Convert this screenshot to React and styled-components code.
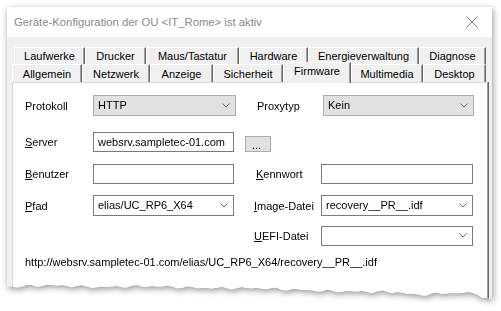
import React from 'react';
import styled, { createGlobalStyle } from 'styled-components';

const GlobalStyle = createGlobalStyle`
  html, body {
    margin: 0;
    padding: 0;
    background: #fff;
  }
  body {
    width: 501px;
    height: 311px;
    overflow: hidden;
    font-family: "Liberation Sans", Arial, sans-serif;
    font-size: 11px;
    color: #000;
  }
`;

// torn bottom edge of the screenshot, points relative to the window box
const edge = [
  [0, 280], [40, 278], [90, 280], [140, 279], [200, 281], [250, 281],
  [320, 284], [390, 285], [410, 288], [440, 286], [470, 286], [476, 291], [485, 293],
];

function tornClip() {
  const pts = ['0 0', '485px 0'];
  const bottom = [];
  for (let x = 0; x <= 485; x += 5) {
    let i = 0;
    while (i < edge.length - 2 && edge[i + 1][0] < x) i++;
    const [x0, y0] = edge[i];
    const [x1, y1] = edge[i + 1];
    const t = Math.min(1, Math.max(0, (x - x0) / (x1 - x0)));
    const y = y0 + (y1 - y0) * t + Math.sin(x * 0.9) * 0.8 + Math.sin(x * 0.23) * 0.7;
    bottom.push(`${x}px ${y.toFixed(1)}px`);
  }
  bottom.reverse().forEach(p => pts.push(p));
  return `polygon(${pts.join(', ')})`;
}

const Stage = styled.div`
  padding: 7px 0 0 7px;
  filter: drop-shadow(1px 2px 3px rgba(0, 0, 0, 0.42));
`;

const DialogWindow = styled.div`
  width: 485px;
  height: 294px;
  background: #f0f0f0;
  display: flex;
  flex-direction: column;
  clip-path: ${p => p.$clip};
`;

const TitleBar = styled.div`
  height: 30px;
  flex: none;
  background: #fff;
  display: flex;
  align-items: center;
  justify-content: space-between;
  padding: 0 14px 0 7px;
  font-family: "Liberation Sans", Arial, sans-serif;
  font-size: 11.3px;
  color: #8a8a8a;
`;

const Body = styled.div`
  flex: 1;
  display: flex;
  flex-direction: column;
  padding: 10px 4px 0 5px;
  min-height: 0;
`;

const TabRow = styled.div`
  display: flex;
  height: ${p => p.$h}px;
  padding-left: ${p => p.$indent}px;
  align-items: flex-end;
  flex: none;
  position: relative;
  z-index: ${p => p.$z};
`;

const Tab = styled.div`
  box-sizing: border-box;
  width: ${p => p.$w}px;
  height: ${p => (p.$active ? 'calc(100% + 3px)' : '100%')};
  margin-top: ${p => (p.$active ? '-2px' : '0')};
  margin-bottom: ${p => (p.$active ? '-1px' : '0')};
  display: flex;
  align-items: center;
  justify-content: center;
  padding-bottom: ${p => (p.$active ? '4px' : '0')};
  background: #f0f0f0;
  border-top: 1px solid #fff;
  border-left: 1px solid #fff;
  border-right: 1px solid #696969;
  box-shadow: inset -1px 0 0 #a0a0a0;
  font-size: 11px;
  white-space: nowrap;
`;

const Panel = styled.div`
  flex: 1;
  width: 476px;
  box-sizing: border-box;
  background: #fff;
  border-top: 1px solid #dadada;
  border-left: 1px solid #dadada;
  border-right: 1px solid #a0a0a0;
  box-shadow: 1px 0 0 #696969;
  padding: 12px 0 0 12px;
  display: flex;
  flex-direction: column;
`;

const FormRow = styled.div`
  display: grid;
  grid-template-columns: 68px 143px 18px 67px 153px;
  align-items: center;
  height: ${p => p.$h}px;
  margin-top: ${p => p.$mt}px;
`;

const Label = styled.div`
  padding-left: ${p => p.$pad || 0}px;
  white-space: nowrap;
  u {
    text-decoration: underline;
    text-underline-offset: 1px;
  }
`;

const Field = styled.div`
  box-sizing: border-box;
  height: 100%;
  width: ${p => p.$w}px;
  margin-left: ${p => p.$ml || 0}px;
  display: flex;
  align-items: center;
  justify-content: space-between;
  padding: 0 5px 1px 4px;
  background: ${p => (p.$flat ? '#e1e1e1' : '#fff')};
  border: 1px solid ${p => (p.$flat ? '#adadad' : '#7a7a7a')};
  font-size: 11px;
  white-space: nowrap;
  overflow: hidden;
`;

const DotsButton = styled.div`
  box-sizing: border-box;
  grid-column: 3 / span 2;
  margin-left: 9px;
  width: 26px;
  height: 16px;
  align-self: end;
  background: #e1e1e1;
  border: 1px solid #adadad;
  padding-left: 6px;
  line-height: 16px;
  font-size: 11px;
`;

const Cell = styled.span``;

const UrlText = styled.div`
  margin-top: 10px;
  line-height: 13px;
  font-size: 11px;
  white-space: nowrap;
`;

function Chevron() {
  return (
    <svg width="8" height="5" viewBox="0 0 8 5">
      <polyline points="0.5,0.5 4,4 7.5,0.5" fill="none" stroke="#6a6a6a" strokeWidth="1" />
    </svg>
  );
}

function CloseIcon() {
  return (
    <svg width="12" height="12" viewBox="0 0 12 12">
      <path d="M0.5 0.5 L11.5 11.5 M11.5 0.5 L0.5 11.5" stroke="#7a7a7a" strokeWidth="1" />
    </svg>
  );
}

function Select({ value, w, flat, ml }) {
  return (
    <Field $w={w} $flat={flat} $ml={ml}>
      <span>{value}</span>
      <Chevron />
    </Field>
  );
}

const backTabs = [
  ['Laufwerke', 71], ['Drucker', 61], ['Maus/Tastatur', 93],
  ['Hardware', 69], ['Energieverwaltung', 111], ['Diagnose', 67],
];

const frontTabs = [
  ['Allgemein', 70], ['Netzwerk', 68], ['Anzeige', 63], ['Sicherheit', 70],
  ['Firmware', 68], ['Multimedia', 72], ['Desktop', 63],
];

export default function App() {
  return (
    <>
      <GlobalStyle />
      <Stage>
        <DialogWindow $clip={tornClip()}>
          <TitleBar>
            <span>Geräte-Konfiguration der OU &lt;IT_Rome&gt; ist aktiv</span>
            <CloseIcon />
          </TitleBar>
          <Body>
            <TabRow $h={17} $indent={2} $z={1}>
              {backTabs.map(([name, w]) => (
                <Tab key={name} $w={w}>{name}</Tab>
              ))}
            </TabRow>
            <TabRow $h={18} $indent={0} $z={2}>
              {frontTabs.map(([name, w]) => (
                <Tab key={name} $w={w} $active={name === 'Firmware'}>{name}</Tab>
              ))}
            </TabRow>
            <Panel>
              <FormRow $h={21} $mt={0}>
                <Label>Protokoll</Label>
                <Select value="HTTP" w={143} flat />
                <Cell />
                <Label $pad={3}>Proxytyp</Label>
                <Select value="Kein" w={151} ml={2} flat />
              </FormRow>
              <FormRow $h={20} $mt={16}>
                <Label><u>S</u>erver</Label>
                <Field $w={141}>websrv.sampletec-01.com</Field>
                <DotsButton>...</DotsButton>
              </FormRow>
              <FormRow $h={20} $mt={12}>
                <Label><u>B</u>enutzer</Label>
                <Field $w={141} />
                <Cell />
                <Label $pad={2}><u>K</u>ennwort</Label>
                <Field $w={152} />
              </FormRow>
              <FormRow $h={21} $mt={11}>
                <Label><u>P</u>fad</Label>
                <Select value="elias/UC_RP6_X64" w={141} />
                <Cell />
                <Label><u>I</u>mage-Datei</Label>
                <Select value="recovery__PR__.idf" w={152} />
              </FormRow>
              <FormRow $h={20} $mt={10}>
                <Cell />
                <Cell />
                <Cell />
                <Label><u>U</u>EFI-Datei</Label>
                <Select value="" w={152} />
              </FormRow>
              <UrlText>http://websrv.sampletec-01.com/elias/UC_RP6_X64/recovery__PR__.idf</UrlText>
            </Panel>
          </Body>
        </DialogWindow>
      </Stage>
    </>
  );
}
